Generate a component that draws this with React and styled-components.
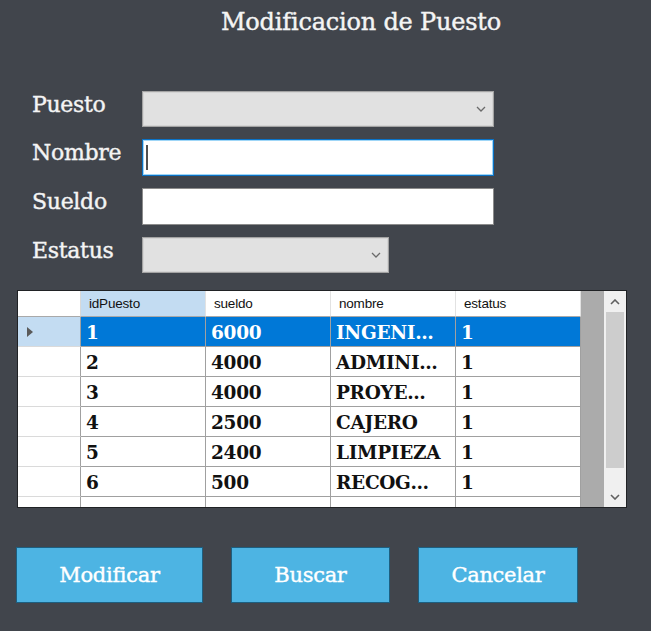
import React from "react";
import styled, { createGlobalStyle } from "styled-components";

const GlobalStyle = createGlobalStyle`
  html, body { margin: 0; padding: 0; background: #41454c; }
  body { width: 651px; height: 631px; overflow: hidden; }
  * { box-sizing: border-box; }
`;

const SLAB = `"DejaVu Serif", "Liberation Serif", serif`;
const SANS = `"Liberation Sans", Arial, sans-serif`;

const Page = styled.div`
  width: 651px;
  height: 631px;
  background: #41454c;
  display: flex;
  flex-direction: column;
  font-family: ${SLAB};
`;

const Title = styled.h1`
  margin: 0;
  height: 44px;
  line-height: 44px;
  padding-left: 221px;
  font-family: ${SLAB};
  font-weight: normal;
  font-size: 24px;
  color: #f4f4f4;
  letter-spacing: -0.2px;
  white-space: nowrap;
  -webkit-text-stroke: 0.4px #f4f4f4;
`;

const Form = styled.div`
  margin-top: 47px;
  padding-left: 32px;
  display: grid;
  grid-template-columns: 110px auto;
  row-gap: 12px;
`;

const Label = styled.label`
  align-self: start;
  line-height: 28px;
  font-size: 22px;
  color: #f4f4f4;
  letter-spacing: -0.3px;
  white-space: nowrap;
  -webkit-text-stroke: 0.4px #f4f4f4;
`;

const Combo = styled.div`
  width: ${(p) => p.$width}px;
  height: 36px;
  background: #e1e1e1;
  border: 1px solid #a3a3a3;
  box-shadow: inset 0 0 0 1px #d4d4d4;
  display: flex;
  align-items: center;
  justify-content: flex-end;
  padding-right: 7px;
`;

const TextBox = styled.div`
  width: 352px;
  height: 37px;
  background: #ffffff;
  border: 1px solid ${(p) => (p.$focused ? "#0a72c6" : "#8c8c8c")};
  box-shadow: ${(p) => (p.$focused ? "inset 0 0 0 1px #9fd6f7" : "none")};
  display: flex;
  align-items: center;
  padding-left: 3px;
`;

const Caret = styled.span`
  display: block;
  width: 2px;
  height: 25px;
  background: #505050;
`;

const Chevron = () => (
  <svg width="10" height="6" viewBox="0 0 10 6">
    <path d="M1 1 L5 5 L9 1" fill="none" stroke="#6a6a6a" strokeWidth="1.3" />
  </svg>
);

const GridFrame = styled.div`
  margin-top: 17px;
  margin-left: 17px;
  width: 610px;
  height: 218px;
  border: 1px solid #202225;
  display: flex;
  background: #ababab;
  overflow: hidden;
`;

const Table = styled.div`
  flex: 1;
  display: flex;
  flex-direction: column;
`;

const Row = styled.div`
  display: grid;
  grid-template-columns: 63px repeat(4, 125px);
  height: ${(p) => p.$height}px;
  flex-shrink: 0;
`;

const HeadCell = styled.div`
  background: ${(p) => (p.$active ? "#c3dcf2" : "#ffffff")};
  border-bottom: 1px solid #a9a9a9;
  border-right: 1px solid ${(p) => (p.$corner ? "#d9d9d9" : "#e2e2e2")};
  font-family: ${SANS};
  font-size: 13.5px;
  color: #111;
  display: flex;
  align-items: center;
  padding-left: 8px;
  letter-spacing: -0.2px;
`;

const RowHead = styled.div`
  background: ${(p) => (p.$active ? "#c3dcf2" : "#ffffff")};
  border-bottom: 1px solid #dadada;
  border-right: 1px solid #a0a0a0;
  display: flex;
  align-items: center;
  padding-left: 9px;
`;

const Pointer = styled.span`
  width: 0;
  height: 0;
  border-top: 5px solid transparent;
  border-bottom: 5px solid transparent;
  border-left: 6px solid #5a5a5a;
`;

const Cell = styled.div`
  background: ${(p) => (p.$selected ? "#0078d7" : "#ffffff")};
  color: ${(p) => (p.$selected ? "#ffffff" : "#111111")};
  border-right: 1px solid #a0a0a0;
  border-bottom: 1px solid #a0a0a0;
  font-family: ${SLAB};
  font-weight: bold;
  font-size: 18.5px;
  display: flex;
  align-items: center;
  padding-left: 5px;
  padding-top: 2px;
  white-space: nowrap;
  overflow: hidden;
  letter-spacing: -0.3px;
`;

const Scrollbar = styled.div`
  width: 22px;
  background: #f0f0f0;
  display: flex;
  flex-direction: column;
  align-items: center;
`;

const ScrollArrow = styled.div`
  width: 22px;
  height: 21px;
  display: flex;
  align-items: center;
  justify-content: center;
  flex-shrink: 0;
`;

const Thumb = styled.div`
  width: 18px;
  height: 156px;
  background: #cdcdcd;
  flex-shrink: 0;
`;

const Track = styled.div`
  flex: 1;
`;

const Buttons = styled.div`
  margin-top: 39px;
  padding-left: 16px;
  display: flex;
  gap: 28px;
`;

const Button = styled.button`
  width: ${(p) => p.$width}px;
  height: 56px;
  background: #4db4e3;
  border: 1px solid #1d5f80;
  color: #ffffff;
  font-family: ${SLAB};
  font-size: 21px;
  letter-spacing: -0.3px;
  padding: 0;
  cursor: pointer;
  -webkit-text-stroke: 0.4px #ffffff;
`;

const rows = [
  ["1", "6000", "INGENI…", "1"],
  ["2", "4000", "ADMINI…", "1"],
  ["3", "4000", "PROYE…", "1"],
  ["4", "2500", "CAJERO", "1"],
  ["5", "2400", "LIMPIEZA", "1"],
  ["6", "500", "RECOG…", "1"],
];

const headers = ["idPuesto", "sueldo", "nombre", "estatus"];

export default function App() {
  return (
    <>
      <GlobalStyle />
      <Page>
        <Title>Modificacion de Puesto</Title>
        <Form>
          <Label>Puesto</Label>
          <Combo $width={352}>
            <Chevron />
          </Combo>
          <Label>Nombre</Label>
          <TextBox $focused>
            <Caret />
          </TextBox>
          <Label>Sueldo</Label>
          <TextBox />
          <Label>Estatus</Label>
          <Combo $width={247}>
            <Chevron />
          </Combo>
        </Form>
        <GridFrame>
          <Table>
            <Row $height={26}>
              <HeadCell $corner />
              {headers.map((h, i) => (
                <HeadCell key={h} $active={i === 0}>
                  {h}
                </HeadCell>
              ))}
            </Row>
            {rows.map((r, ri) => (
              <Row key={ri} $height={30}>
                <RowHead $active={ri === 0}>{ri === 0 && <Pointer />}</RowHead>
                {r.map((v, ci) => (
                  <Cell key={ci} $selected={ri === 0}>
                    {v}
                  </Cell>
                ))}
              </Row>
            ))}
            <Row $height={30}>
              <RowHead />
              <Cell />
              <Cell />
              <Cell />
              <Cell />
            </Row>
          </Table>
          <Scrollbar>
            <ScrollArrow>
              <svg width="10" height="6" viewBox="0 0 10 6">
                <path d="M1 5 L5 1 L9 5" fill="none" stroke="#606060" strokeWidth="1.6" />
              </svg>
            </ScrollArrow>
            <Thumb />
            <Track />
            <ScrollArrow>
              <svg width="10" height="6" viewBox="0 0 10 6">
                <path d="M1 1 L5 5 L9 1" fill="none" stroke="#606060" strokeWidth="1.6" />
              </svg>
            </ScrollArrow>
          </Scrollbar>
        </GridFrame>
        <Buttons>
          <Button $width={187}>Modificar</Button>
          <Button $width={159}>Buscar</Button>
          <Button $width={160}>Cancelar</Button>
        </Buttons>
      </Page>
    </>
  );
}
